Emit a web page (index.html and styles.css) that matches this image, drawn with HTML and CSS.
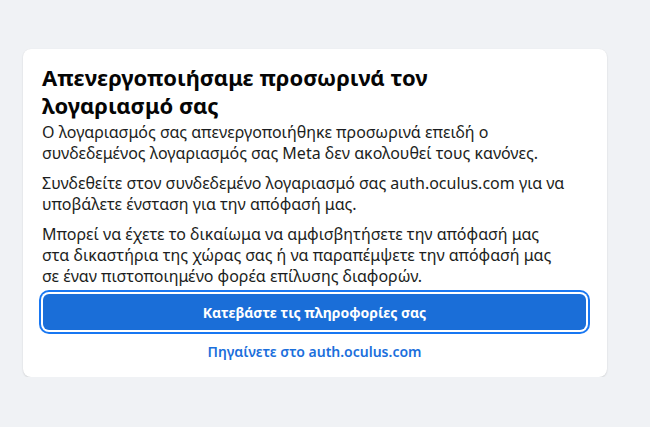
FILE: index.html
```html
<!DOCTYPE html>
<html lang="el">
<head>
<meta charset="utf-8">
<title>Απενεργοποιήσαμε προσωρινά τον λογαριασμό σας</title>
<link rel="stylesheet" href="styles.css">
</head>
<body>
<main class="card">
  <h1 class="title">Απενεργοποιήσαμε προσωρινά τον<br>λογαριασμό σας</h1>
  <p class="text">Ο λογαριασμός σας απενεργοποιήθηκε προσωρινά επειδή ο<br>συνδεδεμένος λογαριασμός σας Meta δεν ακολουθεί τους κανόνες.</p>
  <p class="text">Συνδεθείτε στον συνδεδεμένο λογαριασμό σας auth.oculus.com για να<br>υποβάλετε ένσταση για την απόφασή μας.</p>
  <p class="text">Μπορεί να έχετε το δικαίωμα να αμφισβητήσετε την απόφασή μας<br>στα δικαστήρια της χώρας σας ή να παραπέμψετε την απόφασή μας<br>σε έναν πιστοποιημένο φορέα επίλυσης διαφορών.</p>
  <div class="actions">
    <button class="primary" type="button">Κατεβάστε τις πληροφορίες σας</button>
    <a class="link" href="#">Πηγαίνετε στο auth.oculus.com</a>
  </div>
</main>
</body>
</html>
```

FILE: styles.css
```css
html, body {
  margin: 0;
  padding: 0;
}
body {
  background: #f0f2f5;
  font-family: "Noto Sans", "Open Sans", sans-serif;
  color: #1c1e21;
  padding: 49px 0 0 23px;
}
.card {
  box-sizing: border-box;
  width: 584px;
  background: #ffffff;
  border-radius: 8px;
  box-shadow: 0 1px 2px rgba(0, 0, 0, 0.12), 0 0 1px rgba(0, 0, 0, 0.06);
  padding: 14px 20px 15px 19px;
}
.title {
  margin: 0 0 3px;
  font-size: 22px;
  line-height: 28px;
  font-weight: 700;
  color: #050505;
}
.text {
  margin: 0 0 9px;
  font-size: 16px;
  line-height: 21px;
  color: #1c1e21;
  white-space: nowrap;
}
.card > .text:last-of-type {
  margin-bottom: 7px;
}
.actions {
  display: flex;
  flex-direction: column;
  align-items: stretch;
  gap: 12px;
}
.primary {
  margin: 0 1px;
  height: 36px;
  border: none;
  border-radius: 6px;
  background: #1a6ed8;
  color: #ffffff;
  font-family: inherit;
  font-size: 14px;
  font-weight: 700;
  box-shadow: 0 0 0 2px #ffffff, 0 0 0 4px #1877f2;
}
.link {
  align-self: center;
  color: #1b6fdc;
  font-size: 14px;
  font-weight: 600;
  text-decoration: none;
  line-height: 20px;
}
```
